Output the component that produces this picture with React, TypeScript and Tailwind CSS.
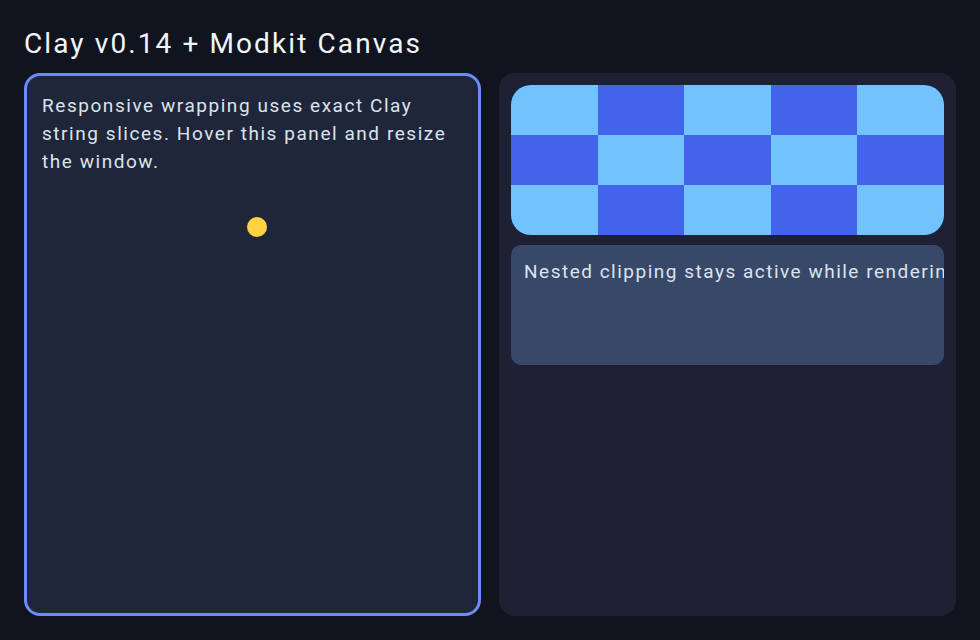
export default function App() {
  const cells = Array.from({ length: 15 }, (_, i) => i);

  return (
    <main
      className="h-[640px] w-[980px] bg-[#10141e] px-6 pb-6 flex flex-col overflow-hidden"
      style={{ fontFamily: "Roboto, 'Noto Sans', sans-serif" }}
    >
      <h1 className="text-[28px] leading-[36px] text-[#f3f5fa] pt-[26px] pb-[11px] tracking-[2.1px]">
        Clay v0.14 + Modkit Canvas
      </h1>

      <div className="flex-1 grid grid-cols-2 gap-[18px] min-h-0">
        {/* left panel */}
        <div className="min-w-0 flex flex-col rounded-[16px] border-[3px] border-[#6b8cff] bg-[#1f2639] px-[15px] pt-[16px]">
          <p className="text-[19px] leading-[28px] text-[#dbe3ef] tracking-[1.55px]">
            Responsive wrapping uses exact Clay string slices. Hover this panel and resize the window.
          </p>
          <div className="flex justify-center pl-[8px] mt-[41px]">
            <span className="block w-5 h-5 rounded-full bg-[#ffd33d]"></span>
          </div>
        </div>

        {/* right panel */}
        <div className="min-w-0 flex flex-col gap-[10px] rounded-[16px] bg-[#1d2133] p-3">
          <div className="h-[150px] shrink-0 rounded-[20px] overflow-hidden grid grid-cols-5 grid-rows-3">
            {cells.map((i) => (
              <div key={i} className={i % 2 === 0 ? "bg-[#71c2ff]" : "bg-[#4264ea]"}></div>
            ))}
          </div>
          <div className="h-[120px] shrink-0 rounded-[10px] bg-[#384868] pl-[13px] pt-[13px] overflow-hidden">
            <p className="whitespace-nowrap text-[19px] leading-[28px] text-[#dbe3ef] tracking-[1.5px]">
              Nested clipping stays active while rendering rich text and images.
            </p>
          </div>
        </div>
      </div>
    </main>
  );
}
